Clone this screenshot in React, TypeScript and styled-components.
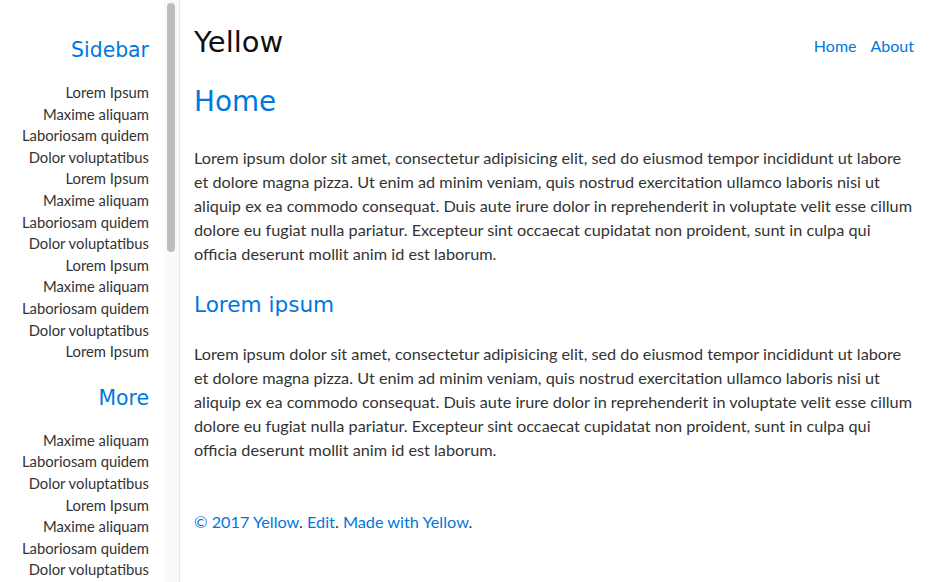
import React from 'react';
import styled, { createGlobalStyle } from 'styled-components';

const GlobalStyle = createGlobalStyle`
  html, body {
    margin: 0;
    padding: 0;
    height: 100%;
    background: #fff;
  }
  #root {
    height: 100%;
  }
`;

const Page = styled.div`
  display: flex;
  height: 582px;
  overflow: hidden;
  font-family: Lato, 'Liberation Sans', sans-serif;
  color: #333;
`;

const Sidebar = styled.aside`
  flex: 0 0 180px;
  display: flex;
  height: 100%;
  border-right: 1px solid #e6e6e6;
  box-sizing: border-box;
`;

const SidebarContent = styled.div`
  flex: 1;
  min-width: 0;
  overflow: hidden;
  text-align: right;
  padding: 37px 15px 0 0;
`;

const ScrollTrack = styled.div`
  flex: 0 0 15px;
  background: #fafafa;
  padding: 3px 4px 0 3px;
  box-sizing: border-box;
`;

const ScrollThumb = styled.div`
  height: 249px;
  border-radius: 5px;
  background: #bcbcc1;
`;

const SideHeading = styled.h2<{ $gap: number }>`
  margin: ${(p) => p.$gap}px 0 0;
  font-family: 'DejaVu Sans', sans-serif;
  font-weight: normal;
  font-size: 20.4px;
  line-height: 26px;
  color: #07d;
`;

const SideList = styled.ul`
  list-style: none;
  margin: 19px 0 0;
  padding: 0;
`;

const SideItem = styled.li`
  font-size: 14.8px;
  line-height: 21.6px;
  color: #333;
  white-space: nowrap;
`;

const Main = styled.main`
  flex: 1;
  min-width: 0;
  padding: 0 22px 0 14px;
`;

const Header = styled.header`
  display: flex;
  justify-content: space-between;
  align-items: flex-start;
  margin-top: 24px;
`;

const SiteName = styled.div`
  font-family: 'DejaVu Sans', sans-serif;
  font-size: 29px;
  line-height: 36px;
  color: #111;
`;

const Nav = styled.nav`
  display: flex;
  gap: 14px;
  padding: 10px 1px 0 0;
  font-size: 16px;
  line-height: 24px;
`;

const Link = styled.a`
  color: #07d;
  text-decoration: none;
`;

const Title = styled.h1`
  margin: 25px 0 0;
  font-family: 'DejaVu Sans', sans-serif;
  font-weight: normal;
  font-size: 27.8px;
  line-height: 34px;
  color: #07d;
`;

const Paragraph = styled.p<{ $gap: number }>`
  margin: ${(p) => p.$gap}px 0 0;
  font-size: 16.25px;
  line-height: 24px;
`;

const SubTitle = styled.h2`
  margin: 25px 0 0;
  font-family: 'DejaVu Sans', sans-serif;
  font-weight: normal;
  font-size: 21.6px;
  line-height: 28px;
  color: #07d;
`;

const Footer = styled.footer`
  margin-top: 48px;
  font-size: 16.25px;
  line-height: 24px;
`;

const base = ['Lorem Ipsum', 'Maxime aliquam', 'Laboriosam quidem', 'Dolor voluptatibus'];
const firstList = Array.from({ length: 13 }, (_, i) => base[i % 4]);
const moreList = Array.from({ length: 16 }, (_, i) => base[(i + 1) % 4]);

const text =
  'Lorem ipsum dolor sit amet, consectetur adipisicing elit, sed do eiusmod tempor incididunt ut labore et dolore magna pizza. Ut enim ad minim veniam, quis nostrud exercitation ullamco laboris nisi ut aliquip ex ea commodo consequat. Duis aute irure dolor in reprehenderit in voluptate velit esse cillum dolore eu fugiat nulla pariatur. Excepteur sint occaecat cupidatat non proident, sunt in culpa qui officia deserunt mollit anim id est laborum.';

export default function App() {
  return (
    <>
      <GlobalStyle />
      <Page>
        <Sidebar>
          <SidebarContent>
            <SideHeading $gap={0}>Sidebar</SideHeading>
            <SideList>
              {firstList.map((item, i) => (
                <SideItem key={i}>{item}</SideItem>
              ))}
            </SideList>
            <SideHeading $gap={22}>More</SideHeading>
            <SideList>
              {moreList.map((item, i) => (
                <SideItem key={i}>{item}</SideItem>
              ))}
            </SideList>
          </SidebarContent>
          <ScrollTrack>
            <ScrollThumb />
          </ScrollTrack>
        </Sidebar>
        <Main>
          <Header>
            <SiteName>Yellow</SiteName>
            <Nav>
              <Link href="#">Home</Link>
              <Link href="#">About</Link>
            </Nav>
          </Header>
          <Title>Home</Title>
          <Paragraph $gap={27}>{text}</Paragraph>
          <SubTitle>Lorem ipsum</SubTitle>
          <Paragraph $gap={23}>{text}</Paragraph>
          <Footer>
            <Link href="#">© 2017 Yellow</Link>. <Link href="#">Edit</Link>.{' '}
            <Link href="#">Made with Yellow</Link>.
          </Footer>
        </Main>
      </Page>
    </>
  );
}
